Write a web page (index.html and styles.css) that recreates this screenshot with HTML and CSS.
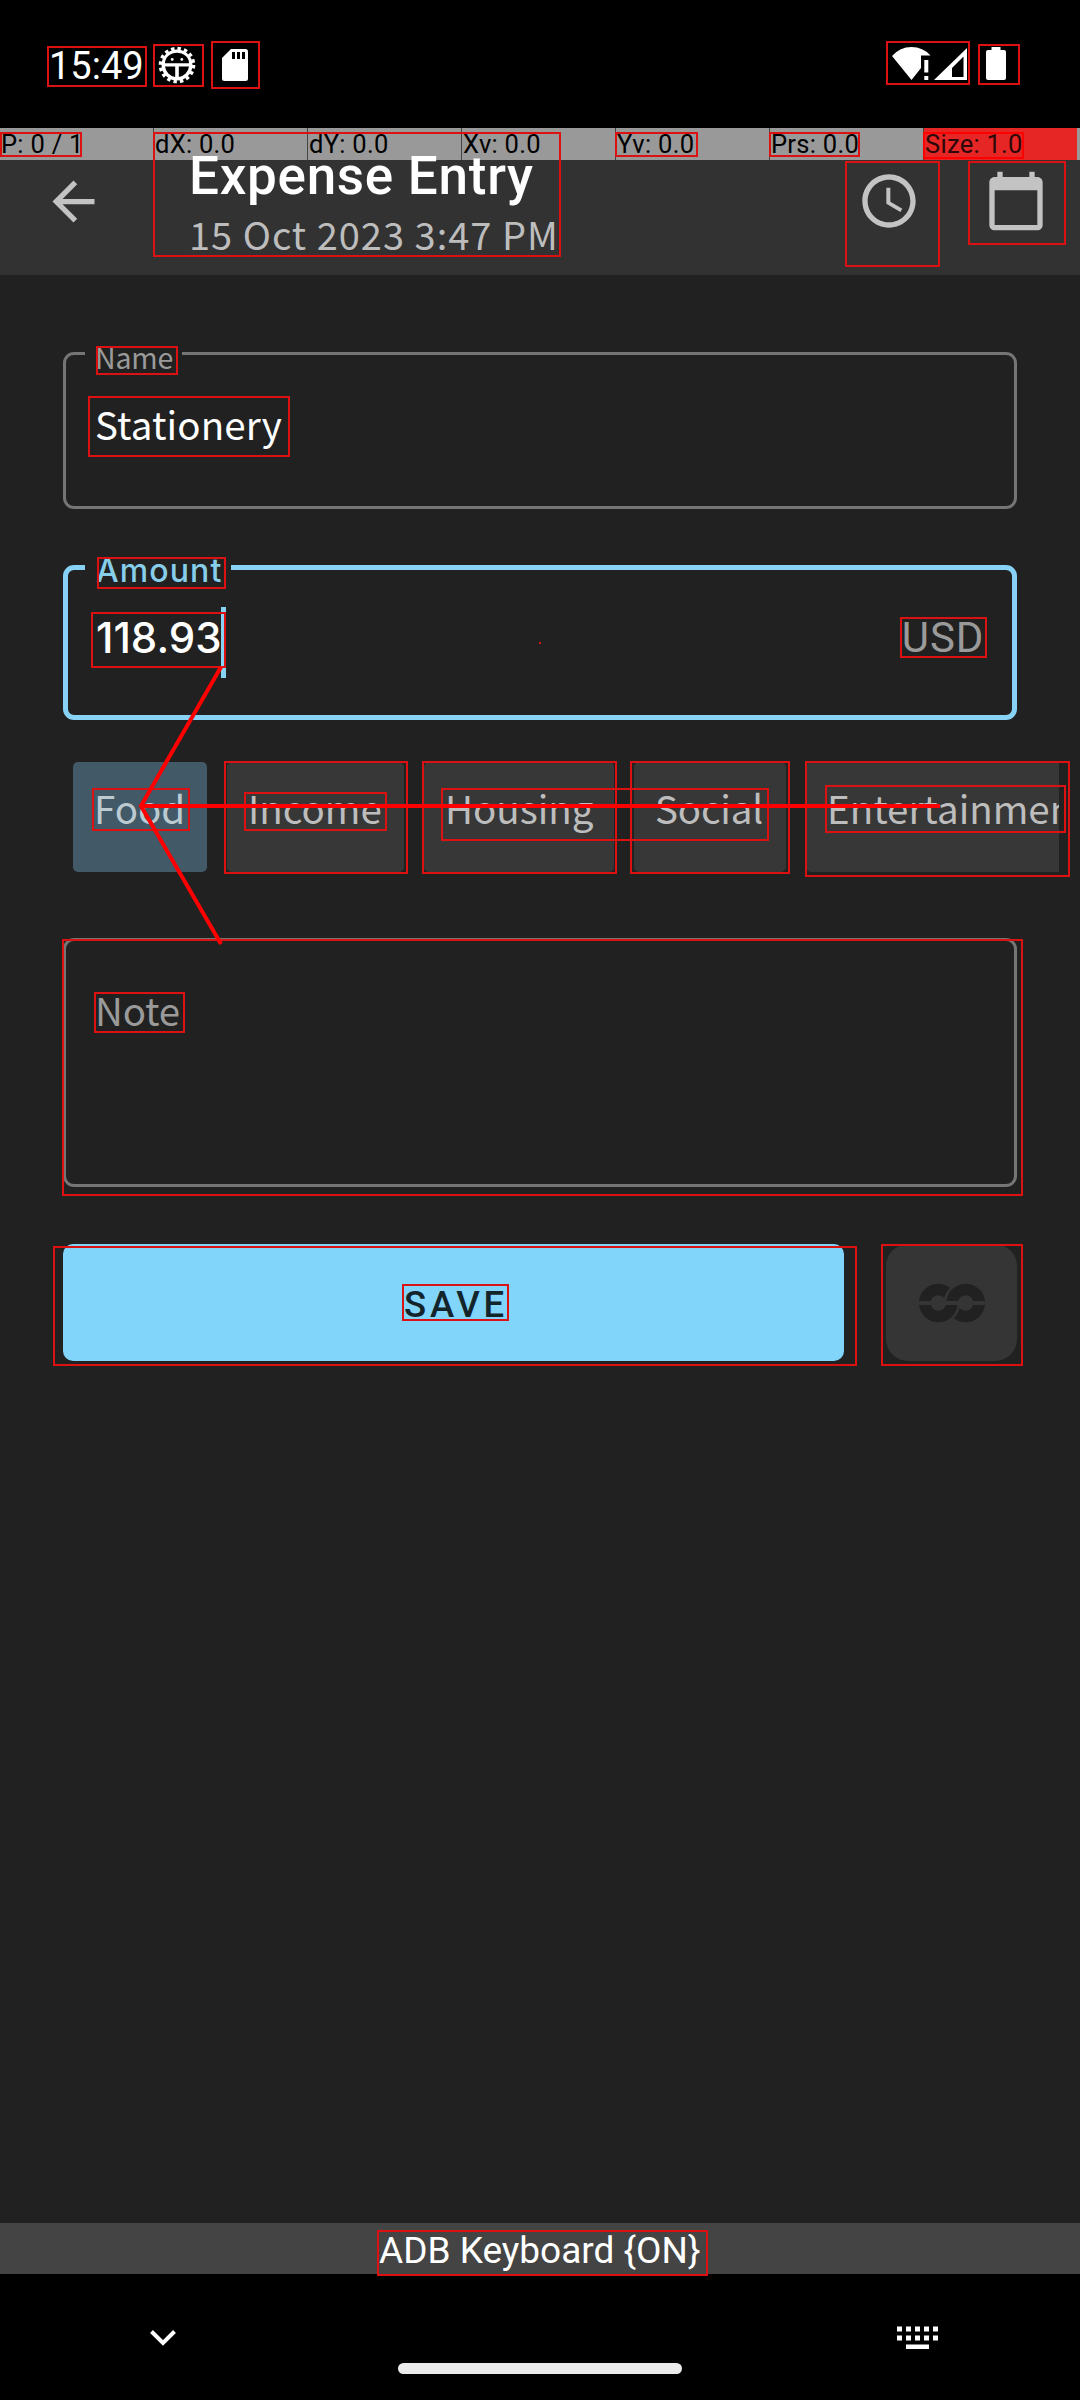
FILE: index.html
```html
<!DOCTYPE html>
<html lang="en">
<head>
<meta charset="utf-8">
<title>Expense Entry</title>
<link rel="stylesheet" href="styles.css">
</head>
<body>
<div class="screen">
  <div class="status">
    <span class="time">15:49</span>
    <svg class="bug" width="38" height="38" viewBox="-19 -19 38 38"><circle r="15.5" fill="#fff"/><circle r="16.600" fill="none" stroke="#fff" stroke-width="3.400" stroke-dasharray="3.400 3.120"/><path d="M-12-1.800A12 10.500 0 0 1 12-1.800ZM-12 1.600H-1.800V12A12 12 0 0 1-12 1.600ZM1.800 1.600H12A12 12 0 0 1 1.800 12Z" fill="#000"/><circle cx="-4.800" cy="-5.600" r="1.400" fill="#fff"/><circle cx="4.800" cy="-5.600" r="1.400" fill="#fff"/></svg>
    <svg class="sd" width="26" height="32" viewBox="0 0 26 32"><path d="M9 0H23.500Q26 0 26 2.500V29.500Q26 32 23.500 32H2.500Q0 32 0 29.500V9Z" fill="#fff"/><path d="M10 3h3v7h-3zM15 3h3v7h-3zM20 3h3v7h-3z" fill="#000"/></svg>
    <svg class="signals" width="114" height="34" viewBox="892 47 114 34" fill="#fff"><path d="M892 56Q900 47 911.500 47Q923 47 930.500 55.500H921V68L911.500 80Z"/><path d="M924.300 60h4v12.500h-4zM924.300 76h4v4h-4z"/><path d="M967 48V80H934ZM963.500 56.500L952 68V77H963.500Z" fill-rule="evenodd"/><path d="M991.500 47h9v3h3.500q2 0 2 2V78q0 2-2 2H988q-2 0-2-2V52q0-2 2-2h3.500z"/></svg>
  </div>
  <div class="pointer">
    <span>P: 0 / 1</span><span>dX: 0.0</span><span>dY: 0.0</span><span>Xv: 0.0</span><span>Yv: 0.0</span><span>Prs: 0.0</span><span class="size">Size: 1.0</span>
  </div>
  <header class="bar">
    <svg class="back" width="63" height="63" viewBox="0 0 24 24"><path d="M20 11H7.830l5.590-5.590L12 4l-8 8 8 8 1.410-1.410L7.830 13H20v-2z" fill="#c3c3c3"/></svg>
    <div class="titles"><h1>Expense Entry</h1><p>15 Oct 2023 3:47 PM</p></div>
    <svg class="clock" width="64" height="64" viewBox="0 0 24 24" fill="#c3c3c3"><path d="M11.990 2C6.470 2 2 6.480 2 12s4.470 10 9.990 10C17.520 22 22 17.520 22 12S17.520 2 11.990 2zM12 20c-4.420 0-8-3.580-8-8s3.580-8 8-8 8 3.580 8 8-3.580 8-8 8z"/><path d="M12.500 7H11v6l5.250 3.150.750-1.230-4.500-2.670z"/></svg>
    <svg class="cal" width="64" height="64" viewBox="0 0 24 24" fill="#c3c3c3"><path d="M20 3h-1V1h-2v2H7V1H5v2H4c-1.100 0-2 .900-2 2v16c0 1.100.900 2 2 2h16c1.100 0 2-.900 2-2V5c0-1.100-.900-2-2-2zm0 18H4V8h16v13z"/></svg>
  </header>
  <main class="form">
    <div class="field name"><label class="label">Name</label><span class="value">Stationery</span></div>
    <div class="field amount"><label class="label">Amount</label><span class="number">118.93</span><i class="caret"></i><span class="unit">USD</span></div>
    <div class="chips">
      <span class="chip on">Food</span><span class="chip income">Income</span><span class="chip housing">Housing</span><span class="chip social">Social</span><span class="chip ent">Entertainment</span>
    </div>
    <div class="field note"><span class="hint">Note</span></div>
    <div class="actions">
      <button class="save"><span>SAVE</span></button>
      <button class="link" aria-label="Link"><svg width="68" height="42" viewBox="917 1281 68 42"><defs><clipPath id="top"><path d="M910 1270h90v30h-90z"/></clipPath><clipPath id="low"><path d="M910 1304h90v30h-90z"/></clipPath></defs><g fill="none" stroke="#212121" stroke-width="11.600"><g clip-path="url(#top)"><circle cx="937.300" cy="1302" r="13.500"/><circle cx="964.700" cy="1302" r="22" fill="#353535" stroke="none"/><circle cx="964.700" cy="1302" r="13.500"/></g><g clip-path="url(#low)"><circle cx="964.700" cy="1302" r="13.500"/><circle cx="937.300" cy="1302" r="22" fill="#353535" stroke="none"/><circle cx="937.300" cy="1302" r="13.500"/></g></g></svg></button>
    </div>
  </main>
  <div class="ime"><span>ADB Keyboard {ON}</span></div>
  <nav class="nav">
    <svg class="down" width="26" height="16" viewBox="0 0 26 16"><path d="M1.500 1.500L13 13L24.500 1.500" fill="none" stroke="#fff" stroke-width="4"/></svg>
    <i class="pill"></i>
    <svg class="kbd" width="42" height="24" viewBox="0 0 42 24"><path d="M0 .500h5v5h-5zM9 .500h5v5h-5zM18 .500h5v5h-5zM27 .500h5v5h-5zM36 .500h5v5h-5zM0 9.500h5v5h-5zM9 9.500h5v5h-5zM18 9.500h5v5h-5zM27 9.500h5v5h-5zM36 9.500h5v5h-5zM9 18.500h23v4.500H9z" fill="#fff"/></svg>
  </nav>
  <!-- element bounds and gesture arrows, drawn over the whole screen -->
  <svg class="marks" width="1080" height="2400" viewBox="0 0 1080 2400" fill="none">
    <g stroke="#dc1212" stroke-width="2">
      <path d="M48 47h98v39H48zM154 45h49v41h-49zM212 42h47v46h-47zM887 42h82v42h-82zM979 45h40v39h-40z"/>
      <path d="M1 133h80v23H1zM154 133h406v123H154zM616 133h81v23h-81zM770 133h89v23h-89z"/>
      <path d="M924 133h99v25h-99z" stroke="#f00"/>
      <path d="M846 162h93v104h-93zM969 162h96v82h-96z"/>
      <path d="M97 347h80v27H97zM89 397h200v59H89zM98 558h127v30H98zM92 613h133v54H92zM901 618h85v39h-85z"/>
      <path d="M93 789h96v41H93zM225 762h182v111H225zM245 793h141v37H245zM423 762h193v111H423zM442 789h326v51H442zM631 762h158v111H631zM806 762h263v114H806zM826 786h239v46H826z"/>
      <path d="M63 940h959v255H63zM95 993h89v39H95zM54 1247h802v118H54zM403 1285h105v35H403zM882 1245h140v120H882zM378 2231h329v44H378z"/>
      <path d="M539 643h2"/>
    </g>
    <path d="M221 667L141 806L221 944M141 806H940" stroke="#f00" stroke-width="4"/>
  </svg>
</div>
</body>
</html>
```
FILE: styles.css
```css
* { box-sizing: border-box; }
body { margin: 0; background: #212121; font-family: Roboto, sans-serif; }
.screen { position: relative; width: 1080px; height: 2400px; display: flex; flex-direction: column; overflow: hidden; }
svg { display: block; flex: none; }
.status { height: 128px; background: #000; display: flex; align-items: flex-start; padding: 46px 74px 0 49px; color: #fff; }
.time { font-size: 38px; line-height: 40px; width: 109px; }
.sd { margin: 3px 0 0 26px; }
.signals { margin: 1px 0 0 auto; }
.pointer { height: 32px; background: #999; display: flex; gap: 1px; }
.pointer span { width: 153px; font-size: 25.5px; line-height: 32px; letter-spacing: .28px; padding-left: 1px; color: #000; white-space: pre; box-shadow: 1px 0 #444; }
.pointer .size { background: #e62525; color: #2d0808; box-shadow: none; }
.bar { height: 115px; background: #323232; display: flex; align-items: flex-start; }
.back { margin: 10px 0 0 42px; }
.titles { margin: -15px 0 0 84px; width: 668px; }
h1 { margin: 0; font-size: 53px; line-height: 62px; font-weight: 500; letter-spacing: .72px; color: #fff; }
p { margin: 0; font: 38px/53px "Noto Sans CJK SC", sans-serif; letter-spacing: 1px; color: #bdbdbd; }
.clock { margin-top: 9px; }
.cal { margin: 9px 0 0 63px; }
.form { flex: 1; padding: 77px 21px 0 63px; display: flex; flex-direction: column; font-family: "Noto Sans CJK SC", sans-serif; }
.field { position: relative; width: 954px; border: 3px solid #757575; border-radius: 11px; display: flex; }
.label { position: absolute; left: 19px; top: -14px; height: 32px; background: #212121; color: #9a9a9a; font-size: 28.5px; line-height: 32px; letter-spacing: -.2px; padding-left: 10px; width: 97px; }
.name { height: 157px; padding: 38px 0 0 29px; }
.value { font-size: 38.5px; line-height: 60px; letter-spacing: .1px; color: #fff; }
.amount { height: 155px; margin-top: 56px; border: 5px solid #87d2f5; padding: 37px 28px 0 28px; }
.amount .label { left: 17px; top: -15px; width: 146px; padding-left: 11px; font-family: Inter, sans-serif; font-size: 32px; letter-spacing: 1.1px; font-weight: 500; color: #87ceeb; }
.number { font: 500 42px/61px Inter, sans-serif; color: #fff; width: 125px; white-space: nowrap; }
.caret { width: 5px; height: 71px; background: #87d2f5; }
.unit { margin-left: auto; font: 42px/61px Roboto, sans-serif; letter-spacing: .8px; color: #9a9a9a; }
.chips { display: flex; gap: 20px; margin: 42px 0 0 10px; width: 986px; height: 110px; overflow: hidden; }
.chip { flex: none; height: 110px; border-radius: 5px; background: #373737; color: #bdbdbd; font-size: 38.5px; line-height: 90px; padding-left: 21px; white-space: nowrap; }
.on { width: 134px; background: #425a68; color: #bccad1; }
.income { width: 177px; }
.housing { width: 190px; }
.social { width: 152px; letter-spacing: -.2px; }
.ent { width: 330px; }
.note { height: 249px; margin-top: 66px; padding: 38px 0 0 29px; }
.hint { font-size: 38.5px; line-height: 60px; letter-spacing: -.2px; color: #9a9a9a; }
.actions { display: flex; gap: 42px; margin-top: 57px; }
button { border: 0; padding: 0; height: 117px; display: flex; align-items: center; justify-content: center; }
.save { width: 781px; border-radius: 10px; background: #81d4fa; color: #14242b; font: 500 36.5px/40px Roboto, sans-serif; letter-spacing: 3.7px; padding: 4px 0 0 5px; }
.link { width: 131px; border-radius: 22px; background: #353535; }
.ime { height: 51px; background: #444; color: #fff; font-size: 37px; line-height: 55px; padding-left: 379px; }
.nav { height: 126px; background: #000; display: flex; align-items: flex-start; }
.down { margin: 56px 0 0 150px; }
.pill { margin: 89px 0 0 222px; width: 284px; height: 11px; border-radius: 6px; background: #ebebeb; }
.kbd { margin: 52px 0 0 215px; }
.marks { position: absolute; left: 0; top: 0; }
```
